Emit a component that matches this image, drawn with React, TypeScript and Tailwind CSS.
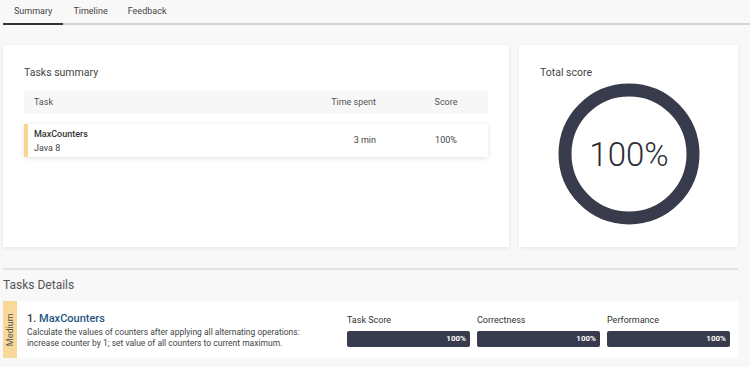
import React from 'react';

const bars = ['Task Score', 'Correctness', 'Performance'];

function Donut() {
  return (
    <svg width="142" height="142" viewBox="0 0 142 142">
      <circle cx="71" cy="71" r="64" fill="none" stroke="#383b4b" strokeWidth="13" />
      <text
        x="71"
        y="83"
        textAnchor="middle"
        fontSize="33"
        fontWeight="300"
        fill="#2b2d36"
        fontFamily="Roboto, sans-serif"
      >
        100%
      </text>
    </svg>
  );
}

export default function App() {
  return (
    <div className="w-[750px] h-[367px] overflow-hidden bg-[#f8f8f8] font-['Roboto',sans-serif] text-[#333]">
      {/* tabs */}
      <div className="ml-[3px] flex h-[25px] items-end border-b-2 border-[#d4d4d4] text-[9px] leading-[13px] text-[#444]">
        <div className="-mb-[2px] border-b-2 border-[#333] px-[11px] pb-[5px]">Summary</div>
        <div className="px-[10px] pb-[5px]">Timeline</div>
        <div className="px-[10px] pb-[5px]">Feedback</div>
      </div>

      {/* summary cards */}
      <div className="mt-[20px] ml-[3px] flex gap-[10px]">
        <div className="h-[202px] w-[506px] bg-white px-[21px] pt-[21px] shadow-[0_1px_4px_rgba(0,0,0,0.08)]">
          <div className="text-[10.5px] leading-[13px] text-[#444]">Tasks summary</div>
          <div className="mt-[12px] flex h-[23px] items-center bg-[#f7f7f7] text-[9px] text-[#555]">
            <div className="flex-1 pl-[10px]">Task</div>
            <div className="w-[147px] pr-[35px] text-right">Time spent</div>
            <div className="w-[77px] pr-[7px] text-center">Score</div>
          </div>
          <div className="mt-[10px] flex h-[33px] items-center border-l-4 border-[#f8d68f] bg-white text-[9px] shadow-[0_1px_5px_rgba(0,0,0,0.13)]">
            <div className="flex-1 pl-[6px] leading-[14px]">
              <div className="font-medium text-[#333]">MaxCounters</div>
              <div className="text-[#444]">Java 8</div>
            </div>
            <div className="w-[147px] pr-[35px] text-right text-[#444]">3 min</div>
            <div className="w-[77px] pr-[7px] text-center text-[#444]">100%</div>
          </div>
        </div>

        <div className="flex h-[202px] w-[219px] flex-col bg-white px-[21px] pt-[21px] shadow-[0_1px_4px_rgba(0,0,0,0.08)]">
          <div className="text-[10.5px] leading-[13px] text-[#444]">Total score</div>
          <div className="mt-[4px] flex justify-center">
            <Donut />
          </div>
        </div>
      </div>

      <div className="mt-[21px] ml-[3px] w-[735px] border-t-2 border-[#e2e2e2]" />

      <div className="mt-[8px] ml-[3px] text-[12px] leading-[14px] text-[#555]">Tasks Details</div>

      {/* details */}
      <div className="mt-[9px] ml-[3px] flex h-[57px] w-[735px] bg-white">
        <div className="flex w-[14px] items-center justify-center bg-[#f9d99a]">
          <span className="-rotate-90 whitespace-nowrap text-[9px] text-[#555]">Medium</span>
        </div>
        <div className="w-[320px] pl-[10px] pt-[11px]">
          <div className="text-[11px] font-medium leading-[13px] text-[#1f5682]">
            <span className="text-[#333]">1. </span>MaxCounters
          </div>
          <div className="mt-[2px] text-[8.5px] leading-[10.5px] text-[#444]">
            Calculate the values of counters after applying all alternating operations:
            <br />
            increase counter by 1; set value of all counters to current maximum.
          </div>
        </div>
        <div className="ml-auto flex gap-[7px] pr-[8px] pt-[14px]">
          {bars.map((b) => (
            <div key={b} className="w-[123px]">
              <div className="text-[9px] leading-[11px] text-[#333]">{b}</div>
              <div className="mt-[5px] flex h-[16px] items-center justify-end rounded-[2px] bg-[#383b4b] pr-[4px] text-[8px] font-bold text-white">
                100%
              </div>
            </div>
          ))}
        </div>
      </div>
    </div>
  );
}
